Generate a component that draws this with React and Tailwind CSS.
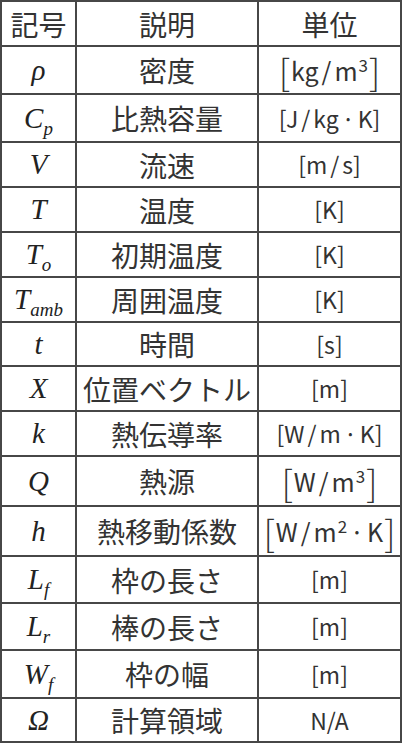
import React from "react";

const jp = "font-['Noto_Sans_CJK_JP','Noto_Sans',sans-serif]";
const math = "font-['Liberation_Serif',serif] italic";

function Slash() {
  return <span className="mx-[3px]">/</span>;
}

function Dot() {
  return <span className="mx-[3px]">·</span>;
}

function Sup({ children }) {
  return <span className="text-[17px] relative -top-[9px] ml-[1px]">{children}</span>;
}

function Unit({ children }) {
  return <span className={`${jp} text-[23px] leading-none text-[#333]`}>[{children}]</span>;
}

function BigUnit({ children }) {
  return (
    <span className={`${jp} flex items-center text-[#333]`}>
      <span className="text-[36px] font-light leading-none">[</span>
      <span className="text-[25px] leading-none px-[1px]">{children}</span>
      <span className="text-[36px] font-light leading-none">]</span>
    </span>
  );
}

function Sub({ children }) {
  return <span className="text-[19px] relative top-[7px]">{children}</span>;
}

const rows = [
  { sym: "ρ", desc: "密度", unit: <BigUnit>kg<Slash />m<Sup>3</Sup></BigUnit> },
  { sym: <>C<Sub>p</Sub></>, desc: "比熱容量", unit: <Unit>J<Slash />kg<Dot />K</Unit> },
  { sym: "V", desc: "流速", unit: <Unit>m<Slash />s</Unit> },
  { sym: "T", desc: "温度", unit: <Unit>K</Unit> },
  { sym: <>T<Sub>o</Sub></>, desc: "初期温度", unit: <Unit>K</Unit> },
  { sym: <>T<Sub>amb</Sub></>, desc: "周囲温度", unit: <Unit>K</Unit> },
  { sym: "t", desc: "時間", unit: <Unit>s</Unit> },
  { sym: "X", desc: "位置ベクトル", unit: <Unit>m</Unit> },
  { sym: "k", desc: "熱伝導率", unit: <Unit>W<Slash />m<Dot />K</Unit> },
  { sym: "Q", desc: "熱源", unit: <BigUnit>W<Slash />m<Sup>3</Sup></BigUnit> },
  { sym: "h", desc: "熱移動係数", unit: <BigUnit>W<Slash />m<Sup>2</Sup><Dot />K</BigUnit> },
  { sym: <>L<Sub>f</Sub></>, desc: "枠の長さ", unit: <Unit>m</Unit> },
  { sym: <>L<Sub>r</Sub></>, desc: "棒の長さ", unit: <Unit>m</Unit> },
  { sym: <>W<Sub>f</Sub></>, desc: "枠の幅", unit: <Unit>m</Unit> },
  { sym: "Ω", desc: "計算領域", unit: <span className={`${jp} text-[23px] leading-none text-[#333]`}>N/A</span> },
];

export default function App() {
  return (
    <div className="bg-white w-[404px] h-[746px]">
      <div className="w-[402px] bg-[#474747] p-[2px] grid grid-cols-[73px_180px_141px] grid-rows-[43px_46px_46px_43px_43px_43px_43px_42px_43px_43px_48px_48px_45px_45px_46px_42px] gap-[2px]">
        <div className={`bg-white flex items-center justify-center ${jp} text-[28px] leading-none text-[#333]`}>記号</div>
        <div className={`bg-white flex items-center justify-center ${jp} text-[28px] leading-none text-[#333]`}>説明</div>
        <div className={`bg-white flex items-center justify-center ${jp} text-[28px] leading-none text-[#333]`}>単位</div>
        {rows.map((r, i) => (
          <React.Fragment key={i}>
            <div className={`bg-white flex items-center justify-center ${math} text-[29px] leading-none text-[#222]`}>
              <span>{r.sym}</span>
            </div>
            <div className={`bg-white flex items-center justify-center ${jp} text-[28px] leading-none text-[#333]`}>
              {r.desc}
            </div>
            <div className="bg-white flex items-center justify-center">{r.unit}</div>
          </React.Fragment>
        ))}
      </div>
    </div>
  );
}
